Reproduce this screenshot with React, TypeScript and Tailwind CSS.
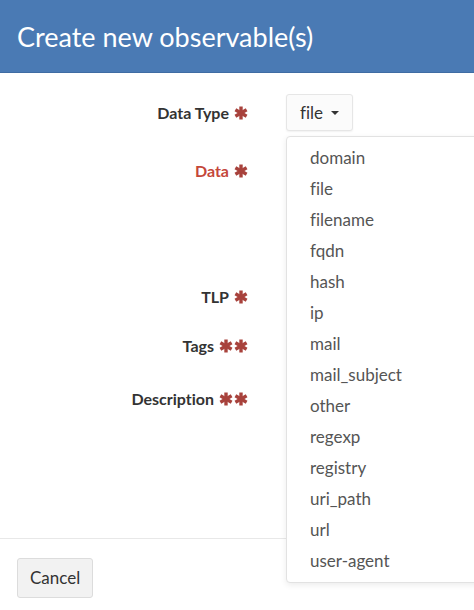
import React from "react";

const dataTypes = [
  "domain",
  "file",
  "filename",
  "fqdn",
  "hash",
  "ip",
  "mail",
  "mail_subject",
  "other",
  "regexp",
  "registry",
  "uri_path",
  "url",
  "user-agent",
];

// heavy six-arm asterisk, like the icon font one
const Star: React.FC = () => (
  <svg width="14" height="14" viewBox="0 0 14 14" className="inline-block">
    <g stroke="#a8423c" strokeWidth="3.4" strokeLinecap="butt">
      <line x1="7" y1="0.5" x2="7" y2="13.5" />
      <line x1="1.4" y1="3.8" x2="12.6" y2="10.2" />
      <line x1="1.4" y1="10.2" x2="12.6" y2="3.8" />
    </g>
  </svg>
);

const Label: React.FC<{ text: string; stars?: number; error?: boolean }> = ({ text, stars = 1, error }) => (
  <div className={`flex items-center justify-end gap-[5px] font-bold text-[16px] leading-6 ${error ? "text-[#c4473a]" : "text-[#333]"}`}>
    <span>{text}</span>
    <span className="flex gap-[1px]">
      {Array.from({ length: stars }).map((_, i) => (
        <Star key={i} />
      ))}
    </span>
  </div>
);

const App: React.FC = () => {
  return (
    <div
      className="relative w-[474px] h-[610px] overflow-hidden bg-white [font-variant-ligatures:none]"
      style={{ fontFamily: "Lato, 'Open Sans', sans-serif" }}
    >
      {/* Header */}
      <div className="h-[73px] bg-[#4a7ab4] border-b border-[#3f6ca3] flex items-center px-[17px]">
        <h1 className="text-white text-[27px] leading-none">Create new observable(s)</h1>
      </div>

      {/* Body */}
      <div className="h-[465px] pt-[21px]">
        {/* Data Type */}
        <div className="flex items-center h-[37px]">
          <div className="w-[248px]">
            <Label text="Data Type" />
          </div>
          <div className="ml-[38px]">
            <button className="h-[37px] px-[13px] flex items-center gap-[8px] bg-[#fbfbfb] border border-[#e6e6e6] rounded-[3px] shadow-[0_1px_2px_rgba(0,0,0,0.06)] text-[17px] text-[#333]">
              file
              <span className="w-0 h-0 border-l-[4px] border-r-[4px] border-t-[4px] border-l-transparent border-r-transparent border-t-[#333]" />
            </button>
          </div>
        </div>

        <div className="pt-[28px] h-[154px] w-[248px]">
          <Label text="Data" error />
        </div>
        <div className="h-[49px] w-[248px]">
          <Label text="TLP" />
        </div>
        <div className="h-[53px] w-[248px]">
          <Label text="Tags" stars={2} />
        </div>
        <div className="w-[248px]">
          <Label text="Description" stars={2} />
        </div>
      </div>

      {/* Footer */}
      <div className="border-t border-[#e8e8e8] pt-[19px] px-[17px]">
        <button className="h-[40px] px-[12px] bg-[#f2f2f2] border border-[#dcdcdc] rounded-[3px] text-[17px] text-[#333]">
          Cancel
        </button>
      </div>

      {/* Open dropdown menu */}
      <ul className="absolute top-[136px] left-[286px] w-[220px] pt-[5px] pb-[6px] bg-white border border-[#e2e2e2] rounded-[4px] shadow-[0_2px_6px_rgba(0,0,0,0.08)]">
        {dataTypes.map((t) => (
          <li key={t} className="h-[31px] flex items-center pl-[23px] text-[17px] text-[#555]">
            {t}
          </li>
        ))}
      </ul>
    </div>
  );
};

export default App;
